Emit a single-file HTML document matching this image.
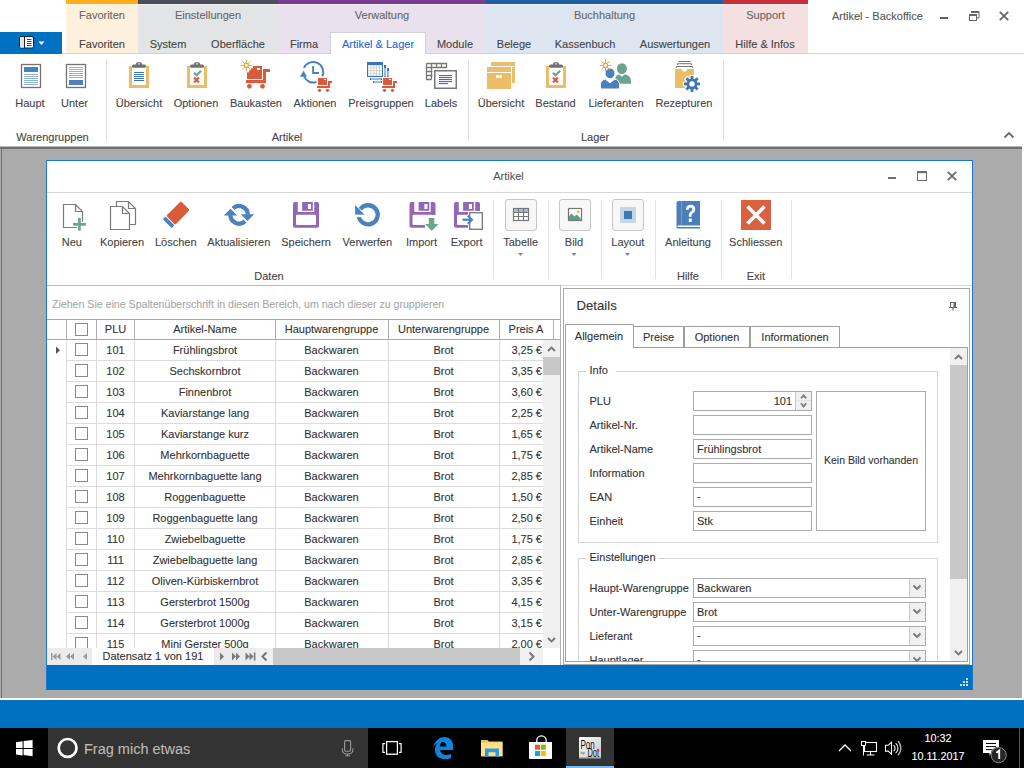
<!DOCTYPE html>
<html><head><meta charset="utf-8">
<style>
*{box-sizing:border-box;margin:0;padding:0}
html,body{width:1024px;height:768px;overflow:hidden;background:#fff}
body{font-family:"Liberation Sans",sans-serif;font-size:11px;color:#444;position:relative}
.a{position:absolute}
svg.a{overflow:visible}
.t{position:absolute;white-space:nowrap;-webkit-text-stroke:0.1px currentColor}
</style></head><body>

<div class="a" style="left:66px;top:0px;width:72px;height:53px;background:#FDF0DC;"></div>
<div class="a" style="left:66px;top:0px;width:72px;height:4px;background:#FFAD1D;"></div>
<div class="a" style="left:66px;top:4px;width:72px;height:1px;background:rgba(255,255,255,0.45);"></div>
<div class="t" style="left:-48.0px;top:8.69px;font-size:11px;line-height:13px;color:#666;width:300px;text-align:center;">Favoriten</div>
<div class="a" style="left:138px;top:0px;width:140px;height:53px;background:#E3E4E6;"></div>
<div class="a" style="left:138px;top:0px;width:140px;height:4px;background:#4B4E57;"></div>
<div class="a" style="left:138px;top:4px;width:140px;height:1px;background:rgba(255,255,255,0.45);"></div>
<div class="t" style="left:58.0px;top:8.69px;font-size:11px;line-height:13px;color:#666;width:300px;text-align:center;">Einstellungen</div>
<div class="a" style="left:278px;top:0px;width:208px;height:53px;background:#E9E1EE;"></div>
<div class="a" style="left:278px;top:0px;width:208px;height:4px;background:#793D8F;"></div>
<div class="a" style="left:278px;top:4px;width:208px;height:1px;background:rgba(255,255,255,0.45);"></div>
<div class="t" style="left:232.0px;top:8.69px;font-size:11px;line-height:13px;color:#666;width:300px;text-align:center;">Verwaltung</div>
<div class="a" style="left:486px;top:0px;width:237px;height:53px;background:#DDE6F0;"></div>
<div class="a" style="left:486px;top:0px;width:237px;height:4px;background:#1F5FA1;"></div>
<div class="a" style="left:486px;top:4px;width:237px;height:1px;background:rgba(255,255,255,0.45);"></div>
<div class="t" style="left:454.5px;top:8.69px;font-size:11px;line-height:13px;color:#666;width:300px;text-align:center;">Buchhaltung</div>
<div class="a" style="left:723px;top:0px;width:85px;height:53px;background:#F4DFE1;"></div>
<div class="a" style="left:723px;top:0px;width:85px;height:4px;background:#C62F39;"></div>
<div class="a" style="left:723px;top:4px;width:85px;height:1px;background:rgba(255,255,255,0.45);"></div>
<div class="t" style="left:615.5px;top:8.69px;font-size:11px;line-height:13px;color:#666;width:300px;text-align:center;">Support</div>
<div class="a" style="left:0px;top:53px;width:1024px;height:1px;background:#D2D2D2;"></div>
<div class="a" style="left:0px;top:32px;width:62px;height:22px;background:#0070C0;"></div>
<svg class="a" style="left:18px;top:35px" width="28" height="15" viewBox="0 0 28 15"><rect x="1.5" y="1.5" width="14" height="11.5" rx="1.5" fill="#fff" stroke="#10243a" stroke-width="1"/>
 <rect x="2" y="2" width="4.5" height="10.5" fill="#e4e4e4"/>
 <line x1="6.5" y1="1.5" x2="6.5" y2="13" stroke="#10243a" stroke-width="1"/>
 <path d="M9 4.5h4.5M9 6.5h4.5M9 8.5h4.5M9 10.5h4.5" stroke="#444" stroke-width="1"/>
 <path d="M20.5 6.5h6l-3 3.5z" fill="#fff"/></svg>
<div class="a" style="left:330px;top:32px;width:96px;height:22px;background:#fff;border:1px solid #D2D2D2;border-bottom:none"></div>
<div class="t" style="left:-48.0px;top:37.69px;font-size:11px;line-height:13px;color:#444;width:300px;text-align:center;">Favoriten</div>
<div class="t" style="left:18.0px;top:37.69px;font-size:11px;line-height:13px;color:#444;width:300px;text-align:center;">System</div>
<div class="t" style="left:88.0px;top:37.69px;font-size:11px;line-height:13px;color:#444;width:300px;text-align:center;">Oberfläche</div>
<div class="t" style="left:154.0px;top:37.69px;font-size:11px;line-height:13px;color:#444;width:300px;text-align:center;">Firma</div>
<div class="t" style="left:228.0px;top:37.69px;font-size:11px;line-height:13px;color:#1B6BCB;width:300px;text-align:center;">Artikel &amp; Lager</div>
<div class="t" style="left:305.0px;top:37.69px;font-size:11px;line-height:13px;color:#444;width:300px;text-align:center;">Module</div>
<div class="t" style="left:364.0px;top:37.69px;font-size:11px;line-height:13px;color:#444;width:300px;text-align:center;">Belege</div>
<div class="t" style="left:435.0px;top:37.69px;font-size:11px;line-height:13px;color:#444;width:300px;text-align:center;">Kassenbuch</div>
<div class="t" style="left:525.0px;top:37.69px;font-size:11px;line-height:13px;color:#444;width:300px;text-align:center;">Auswertungen</div>
<div class="t" style="left:615.0px;top:37.69px;font-size:11px;line-height:13px;color:#444;width:300px;text-align:center;">Hilfe &amp; Infos</div>
<div class="t" style="left:832px;top:9.69px;font-size:11px;line-height:13px;color:#555;">Artikel - Backoffice</div>
<div class="a" style="left:940px;top:17px;width:8px;height:2px;background:#666;"></div>
<svg class="a" style="left:968px;top:10px" width="12" height="12" viewBox="0 0 12 12"><path d="M3.5 1.5h7.5v6.5h-2" fill="none" stroke="#666" stroke-width="1"/><rect x="3" y="1" width="8" height="2" fill="#666"/><rect x="1.5" y="4.5" width="7" height="6" fill="none" stroke="#666" stroke-width="1"/><rect x="1" y="4" width="8" height="2" fill="#666"/></svg>
<svg class="a" style="left:999px;top:11px" width="10" height="10" viewBox="0 0 10 10"><path d="M0.8 0.8l8.4 8.4M9.2 0.8L0.8 9.2" stroke="#666" stroke-width="1.8"/></svg>
<div class="a" style="left:106px;top:60px;width:1px;height:81px;background:#E1E1E1;"></div>
<div class="a" style="left:468px;top:60px;width:1px;height:81px;background:#E1E1E1;"></div>
<div class="a" style="left:723px;top:60px;width:1px;height:81px;background:#E1E1E1;"></div>
<div class="t" style="left:-120.0px;top:96.69px;font-size:11px;line-height:13px;color:#444;width:300px;text-align:center;">Haupt</div>
<div class="t" style="left:-75.5px;top:96.69px;font-size:11px;line-height:13px;color:#444;width:300px;text-align:center;">Unter</div>
<div class="t" style="left:-11.0px;top:96.69px;font-size:11px;line-height:13px;color:#444;width:300px;text-align:center;">Übersicht</div>
<div class="t" style="left:46.0px;top:96.69px;font-size:11px;line-height:13px;color:#444;width:300px;text-align:center;">Optionen</div>
<div class="t" style="left:106.0px;top:96.69px;font-size:11px;line-height:13px;color:#444;width:300px;text-align:center;">Baukasten</div>
<div class="t" style="left:165.0px;top:96.69px;font-size:11px;line-height:13px;color:#444;width:300px;text-align:center;">Aktionen</div>
<div class="t" style="left:231.0px;top:96.69px;font-size:11px;line-height:13px;color:#444;width:300px;text-align:center;">Preisgruppen</div>
<div class="t" style="left:291.0px;top:96.69px;font-size:11px;line-height:13px;color:#444;width:300px;text-align:center;">Labels</div>
<div class="t" style="left:351.0px;top:96.69px;font-size:11px;line-height:13px;color:#444;width:300px;text-align:center;">Übersicht</div>
<div class="t" style="left:405.5px;top:96.69px;font-size:11px;line-height:13px;color:#444;width:300px;text-align:center;">Bestand</div>
<div class="t" style="left:466.0px;top:96.69px;font-size:11px;line-height:13px;color:#444;width:300px;text-align:center;">Lieferanten</div>
<div class="t" style="left:534.0px;top:96.69px;font-size:11px;line-height:13px;color:#444;width:300px;text-align:center;">Rezepturen</div>
<div class="t" style="left:-97.5px;top:130.69px;font-size:11px;line-height:13px;color:#444;width:300px;text-align:center;">Warengruppen</div>
<div class="t" style="left:137.0px;top:130.69px;font-size:11px;line-height:13px;color:#444;width:300px;text-align:center;">Artikel</div>
<div class="t" style="left:445.0px;top:130.69px;font-size:11px;line-height:13px;color:#444;width:300px;text-align:center;">Lager</div>
<svg class="a" style="left:0px;top:0px" width="1024" height="768" viewBox="0 0 1024 768"><path d="M1004.5 137.5l4.5-4.5 4.5 4.5" fill="none" stroke="#6a6a6a" stroke-width="1.8"/><rect x="21.5" y="64.5" width="19" height="23" fill="#fff" stroke="#727272" stroke-width="1.3"/><rect x="24" y="67" width="14" height="5" fill="#4A80BB"/><rect x="24" y="74" width="14" height="1" fill="#8FAED4"/><rect x="24" y="76" width="14" height="1" fill="#8FAED4"/><rect x="24" y="78" width="14" height="1" fill="#8FAED4"/><rect x="24" y="80" width="14" height="1" fill="#8FAED4"/><rect x="24" y="82" width="14" height="1" fill="#8FAED4"/><rect x="24" y="84" width="14" height="1" fill="#8FAED4"/><rect x="66.5" y="64.5" width="19" height="23" fill="#fff" stroke="#727272" stroke-width="1.3"/><rect x="69" y="80" width="14" height="5" fill="#4A80BB"/><rect x="69" y="67" width="14" height="1" fill="#8FAED4"/><rect x="69" y="69" width="14" height="1" fill="#8FAED4"/><rect x="69" y="71" width="14" height="1" fill="#8FAED4"/><rect x="69" y="73" width="14" height="1" fill="#8FAED4"/><rect x="69" y="75" width="14" height="1" fill="#8FAED4"/><rect x="69" y="77" width="14" height="1" fill="#8FAED4"/><path d="M129 66h3v19h14v-19h3v22h-20z" fill="#EBBD68"/><rect x="132" y="64.5" width="14" height="3.2" rx="1.5" fill="#707070"/><rect x="136.6" y="62.8" width="4.8" height="2.6" rx="1.3" fill="#707070" stroke="#707070" stroke-width="1.2"/><rect x="138.2" y="63.3" width="1.6" height="1.2" fill="#fff"/><rect x="134" y="72" width="10" height="1" fill="#3B74B4"/><rect x="134" y="74" width="10" height="1" fill="#3B74B4"/><rect x="134" y="76" width="10" height="1" fill="#3B74B4"/><rect x="134" y="78" width="10" height="1" fill="#3B74B4"/><rect x="134" y="80" width="10" height="1" fill="#3B74B4"/><path d="M187 66h3v19h14v-19h3v22h-20z" fill="#EBBD68"/><rect x="190" y="64.5" width="14" height="3.2" rx="1.5" fill="#707070"/><rect x="194.6" y="62.8" width="4.8" height="2.6" rx="1.3" fill="#707070" stroke="#707070" stroke-width="1.2"/><rect x="196.2" y="63.3" width="1.6" height="1.2" fill="#fff"/><path d="M194 72.8l2.6 2.5 4.5-4.6" fill="none" stroke="#6BA38F" stroke-width="2.2"/><path d="M194 77.5l5 5M199 77.5l-5 5" stroke="#D95B3B" stroke-width="2.2"/><path d="M546 66h3v19h14v-19h3v22h-20z" fill="#EBBD68"/><rect x="549" y="64.5" width="14" height="3.2" rx="1.5" fill="#707070"/><rect x="553.6" y="62.8" width="4.8" height="2.6" rx="1.3" fill="#707070" stroke="#707070" stroke-width="1.2"/><rect x="555.2" y="63.3" width="1.6" height="1.2" fill="#fff"/><path d="M553 72.8l2.6 2.5 4.5-4.6" fill="none" stroke="#6BA38F" stroke-width="2.2"/><path d="M553 77.5l5 5M558 77.5l-5 5" stroke="#D95B3B" stroke-width="2.2"/><path d="M253 66h9v13h-15v-6.8h2v-2h2v-2h2z" fill="#D95B3B"/><rect x="257" y="68" width="3" height="2" fill="#fff"/><rect x="263" y="69" width="7" height="3" fill="#D95B3B"/><rect x="263" y="69" width="3" height="14" fill="#D95B3B"/><rect x="246" y="80" width="20" height="3" fill="#D95B3B"/><circle cx="249.4" cy="86.3" r="2.4" fill="#D95B3B"/><circle cx="262.5" cy="86.3" r="2.4" fill="#D95B3B"/><g stroke="#E8A93A" stroke-width="1.0" stroke-linecap="round"><line x1="248.60" y1="65.40" x2="251.90" y2="65.40"/><line x1="247.96" y1="66.96" x2="250.29" y2="69.29"/><line x1="246.40" y1="67.60" x2="246.40" y2="70.90"/><line x1="244.84" y1="66.96" x2="242.51" y2="69.29"/><line x1="244.20" y1="65.40" x2="240.90" y2="65.40"/><line x1="244.84" y1="63.84" x2="242.51" y2="61.51"/><line x1="246.40" y1="63.20" x2="246.40" y2="59.90"/><line x1="247.96" y1="63.84" x2="250.29" y2="61.51"/></g><circle cx="246.4" cy="65.4" r="2" fill="#fff" stroke="#E8A93A" stroke-width="1.1"/><path d="M303.9 67.9 A9.6 9.6 0 0 1 322.3 76.3" fill="none" stroke="#4A82C0" stroke-width="2"/><path d="M316.4 82 A9.6 9.6 0 0 1 304.2 76.5" fill="none" stroke="#4A82C0" stroke-width="2"/><path d="M300 76.8l3.5-6 3.5 6z" fill="#4A82C0"/><path d="M313.1 66v7h5.9" fill="none" stroke="#4A82C0" stroke-width="1.9"/><rect x="318" y="78" width="9" height="7" fill="#D95B3B"/><rect x="324" y="79" width="2" height="1" fill="#fff"/><rect x="328" y="81" width="4" height="2" fill="#D95B3B"/><rect x="328" y="81" width="2" height="7" fill="#D95B3B"/><rect x="317" y="86" width="13" height="2" fill="#D95B3B"/><circle cx="319.5" cy="90.3" r="1.6" fill="#D95B3B"/><circle cx="327.5" cy="90.3" r="1.6" fill="#D95B3B"/><rect x="367" y="62" width="16" height="15" fill="#C8C8C8"/><rect x="367" y="62" width="16" height="3" fill="#3B74B4"/><rect x="367" y="62" width="1" height="15" fill="#3B74B4"/><rect x="382" y="62" width="1" height="15" fill="#3B74B4"/><rect x="367" y="76" width="16" height="1" fill="#3B74B4"/><rect x="368.40" y="65.50" width="2.1" height="2" fill="#fff"/><rect x="368.40" y="68.20" width="2.1" height="2" fill="#fff"/><rect x="368.40" y="70.90" width="2.1" height="2" fill="#fff"/><rect x="368.40" y="73.60" width="2.1" height="2" fill="#fff"/><rect x="371.25" y="65.50" width="2.1" height="2" fill="#fff"/><rect x="371.25" y="68.20" width="2.1" height="2" fill="#fff"/><rect x="371.25" y="70.90" width="2.1" height="2" fill="#fff"/><rect x="371.25" y="73.60" width="2.1" height="2" fill="#fff"/><rect x="374.10" y="65.50" width="2.1" height="2" fill="#fff"/><rect x="374.10" y="68.20" width="2.1" height="2" fill="#fff"/><rect x="374.10" y="70.90" width="2.1" height="2" fill="#fff"/><rect x="374.10" y="73.60" width="2.1" height="2" fill="#fff"/><rect x="376.95" y="65.50" width="2.1" height="2" fill="#fff"/><rect x="376.95" y="68.20" width="2.1" height="2" fill="#fff"/><rect x="376.95" y="70.90" width="2.1" height="2" fill="#fff"/><rect x="376.95" y="73.60" width="2.1" height="2" fill="#fff"/><rect x="379.80" y="65.50" width="2.1" height="2" fill="#fff"/><rect x="379.80" y="68.20" width="2.1" height="2" fill="#fff"/><rect x="379.80" y="70.90" width="2.1" height="2" fill="#fff"/><rect x="379.80" y="73.60" width="2.1" height="2" fill="#fff"/><rect x="384" y="65" width="2" height="12" fill="#3B74B4"/><rect x="384.5" y="68" width="1" height="8.5" fill="#fff"/><rect x="387" y="68" width="2" height="9" fill="#3B74B4"/><rect x="387.5" y="71" width="1" height="5.5" fill="#fff"/><rect x="370" y="78" width="12" height="2" fill="#3B74B4"/><rect x="371" y="78.5" width="10" height="1" fill="#fff"/><rect x="373" y="81" width="9" height="2" fill="#3B74B4"/><rect x="374" y="81.5" width="7" height="1" fill="#fff"/><rect x="383" y="78" width="9" height="7" fill="#D95B3B"/><rect x="389" y="79" width="2" height="1" fill="#fff"/><rect x="393" y="81" width="4" height="2" fill="#D95B3B"/><rect x="393" y="81" width="2" height="7" fill="#D95B3B"/><rect x="382" y="86" width="13" height="2" fill="#D95B3B"/><circle cx="384.5" cy="90.3" r="1.6" fill="#D95B3B"/><circle cx="392.5" cy="90.3" r="1.6" fill="#D95B3B"/><path d="M426.5 63.5h20v4M426.5 63.5v16h5M426.5 67.5h20M426.5 71.5h6M426.5 75.5h6M431.5 63.5v16M436.5 63.5v4.5M441.5 63.5v4.5M446.5 63.5v4.5" fill="none" stroke="#777" stroke-width="1.3"/><rect x="434.75" y="70.75" width="21.5" height="17.5" fill="#fff" stroke="#777" stroke-width="1.5"/><rect x="439" y="75" width="13" height="1.1" fill="#3B74B4"/><rect x="439" y="77" width="13" height="1.1" fill="#3B74B4"/><rect x="439" y="79" width="13" height="1.1" fill="#3B74B4"/><rect x="439" y="81" width="13" height="1.1" fill="#3B74B4"/><rect x="439" y="83" width="9" height="1.1" fill="#3B74B4"/><rect x="491" y="62" width="24" height="4" fill="#EBBD68"/><rect x="512" y="67" width="3" height="16" fill="#EBBD68"/><rect x="487" y="67" width="24" height="5" fill="#EBBD68"/><rect x="487" y="73" width="24" height="16" fill="#EBBD68"/><rect x="496" y="75" width="6" height="3" fill="#fff"/><ellipse cx="621.9" cy="68.6" rx="5" ry="5.4" fill="#6BA38F"/><path d="M615.3 83.7v-4.5c0-3 2-4.8 4-4.8l2.6 2.3 2.6-2.3c3.5 0 6.5 2.5 6.5 6.5v2.8z" fill="#6BA38F"/><path d="M600.5 89v-4.5c0-3.5 2.5-5.2 5-5.2l4.5 3.5 4.5-3.5c3 0 5 2 5 5.2v4.5z" fill="#4A80BB" stroke="#fff" stroke-width="1"/><ellipse cx="610" cy="73.3" rx="5" ry="5.4" fill="#4A80BB" stroke="#fff" stroke-width="1"/><circle cx="605.5" cy="65.4" r="4.5" fill="#fff"/><g stroke="#E8A93A" stroke-width="1.0" stroke-linecap="round"><line x1="607.70" y1="65.40" x2="611.00" y2="65.40"/><line x1="607.06" y1="66.96" x2="609.39" y2="69.29"/><line x1="605.50" y1="67.60" x2="605.50" y2="70.90"/><line x1="603.94" y1="66.96" x2="601.61" y2="69.29"/><line x1="603.30" y1="65.40" x2="600.00" y2="65.40"/><line x1="603.94" y1="63.84" x2="601.61" y2="61.51"/><line x1="605.50" y1="63.20" x2="605.50" y2="59.90"/><line x1="607.06" y1="63.84" x2="609.39" y2="61.51"/></g><circle cx="605.5" cy="65.4" r="2" fill="#fff" stroke="#E8A93A" stroke-width="1.1"/><path d="M678.2 61.5h12.6M677.5 65v-1.3h14v1.3M676.5 67.8v-1.3h16v1.3" fill="none" stroke="#777" stroke-width="1"/><path d="M675 69h7a2.5 2.6 0 0 0 5 0h7v19h-19z" fill="#EBBD68"/><g transform="translate(692,83.9)"><rect x="-2.4" y="-9" width="4.8" height="5.5" fill="#fff" transform="rotate(0)"/><rect x="-2.4" y="-9" width="4.8" height="5.5" fill="#fff" transform="rotate(45)"/><rect x="-2.4" y="-9" width="4.8" height="5.5" fill="#fff" transform="rotate(90)"/><rect x="-2.4" y="-9" width="4.8" height="5.5" fill="#fff" transform="rotate(135)"/><rect x="-2.4" y="-9" width="4.8" height="5.5" fill="#fff" transform="rotate(180)"/><rect x="-2.4" y="-9" width="4.8" height="5.5" fill="#fff" transform="rotate(225)"/><rect x="-2.4" y="-9" width="4.8" height="5.5" fill="#fff" transform="rotate(270)"/><rect x="-2.4" y="-9" width="4.8" height="5.5" fill="#fff" transform="rotate(315)"/><circle r="6.5" fill="#fff"/><rect x="-1.4" y="-8" width="2.8" height="4" fill="#3F76B8" transform="rotate(0)"/><rect x="-1.4" y="-8" width="2.8" height="4" fill="#3F76B8" transform="rotate(45)"/><rect x="-1.4" y="-8" width="2.8" height="4" fill="#3F76B8" transform="rotate(90)"/><rect x="-1.4" y="-8" width="2.8" height="4" fill="#3F76B8" transform="rotate(135)"/><rect x="-1.4" y="-8" width="2.8" height="4" fill="#3F76B8" transform="rotate(180)"/><rect x="-1.4" y="-8" width="2.8" height="4" fill="#3F76B8" transform="rotate(225)"/><rect x="-1.4" y="-8" width="2.8" height="4" fill="#3F76B8" transform="rotate(270)"/><rect x="-1.4" y="-8" width="2.8" height="4" fill="#3F76B8" transform="rotate(315)"/><circle r="5.5" fill="#3F76B8"/><circle r="2.7" fill="#fff"/></g></svg>
<div class="a" style="left:0px;top:146px;width:1024px;height:1px;background:#B8B8B8;"></div>
<div class="a" style="left:0px;top:147px;width:1022px;height:551px;background:#ABABAB;"></div>
<div class="a" style="left:0px;top:147px;width:1022px;height:2px;background:#707070;"></div>
<div class="a" style="left:1px;top:147px;width:1px;height:551px;background:#707070;"></div>
<div class="a" style="left:1022px;top:146px;width:2px;height:552px;background:#fff;"></div>
<div class="a" style="left:0px;top:698px;width:1024px;height:2px;background:#fff;"></div>
<div class="a" style="left:0px;top:700px;width:1024px;height:28px;background:#0070C0;"></div>
<div class="a" style="left:46px;top:160px;width:927px;height:530px;background:#fff;border:1px solid #1B78D0"></div>
<div class="t" style="left:358.5px;top:169.69px;font-size:11px;line-height:13px;color:#555;width:300px;text-align:center;">Artikel</div>
<div class="a" style="left:888px;top:177px;width:8px;height:2px;background:#6E6E6E;"></div>
<div class="a" style="left:47px;top:192px;width:925px;height:1px;background:#D8D8D8;"></div>
<div class="t" style="left:-78.2px;top:235.69px;font-size:11px;line-height:13px;color:#444;width:300px;text-align:center;">Neu</div>
<div class="t" style="left:-28.0px;top:235.69px;font-size:11px;line-height:13px;color:#444;width:300px;text-align:center;">Kopieren</div>
<div class="t" style="left:25.80000000000001px;top:235.69px;font-size:11px;line-height:13px;color:#444;width:300px;text-align:center;">Löschen</div>
<div class="t" style="left:88.80000000000001px;top:235.69px;font-size:11px;line-height:13px;color:#444;width:300px;text-align:center;">Aktualisieren</div>
<div class="t" style="left:156.0px;top:235.69px;font-size:11px;line-height:13px;color:#444;width:300px;text-align:center;">Speichern</div>
<div class="t" style="left:217.3px;top:235.69px;font-size:11px;line-height:13px;color:#444;width:300px;text-align:center;">Verwerfen</div>
<div class="t" style="left:271.5px;top:235.69px;font-size:11px;line-height:13px;color:#444;width:300px;text-align:center;">Import</div>
<div class="t" style="left:316.6px;top:235.69px;font-size:11px;line-height:13px;color:#444;width:300px;text-align:center;">Export</div>
<div class="t" style="left:370.70000000000005px;top:235.69px;font-size:11px;line-height:13px;color:#444;width:300px;text-align:center;">Tabelle</div>
<div class="t" style="left:424.0px;top:235.69px;font-size:11px;line-height:13px;color:#444;width:300px;text-align:center;">Bild</div>
<div class="t" style="left:477.79999999999995px;top:235.69px;font-size:11px;line-height:13px;color:#444;width:300px;text-align:center;">Layout</div>
<div class="t" style="left:538.0px;top:235.69px;font-size:11px;line-height:13px;color:#444;width:300px;text-align:center;">Anleitung</div>
<div class="t" style="left:605.7px;top:235.69px;font-size:11px;line-height:13px;color:#444;width:300px;text-align:center;">Schliessen</div>
<div class="t" style="left:119.0px;top:269.69px;font-size:11px;line-height:13px;color:#444;width:300px;text-align:center;">Daten</div>
<div class="t" style="left:538.0px;top:269.69px;font-size:11px;line-height:13px;color:#444;width:300px;text-align:center;">Hilfe</div>
<div class="t" style="left:605.8px;top:269.69px;font-size:11px;line-height:13px;color:#444;width:300px;text-align:center;">Exit</div>
<div class="a" style="left:493px;top:200px;width:1px;height:79px;background:#E3E3E3;"></div>
<div class="a" style="left:548px;top:200px;width:1px;height:79px;background:#E3E3E3;"></div>
<div class="a" style="left:601px;top:200px;width:1px;height:79px;background:#E3E3E3;"></div>
<div class="a" style="left:655px;top:200px;width:1px;height:79px;background:#E3E3E3;"></div>
<div class="a" style="left:721px;top:200px;width:1px;height:79px;background:#E3E3E3;"></div>
<div class="a" style="left:791px;top:200px;width:1px;height:79px;background:#E3E3E3;"></div>
<div class="a" style="left:47px;top:285px;width:514px;height:1px;background:#B8B8B8;"></div>
<div class="a" style="left:561px;top:285px;width:411px;height:1px;background:#D8D8D8;"></div>
<div class="a" style="left:47px;top:286px;width:513px;height:33px;background:#fff;"></div>
<div class="a" style="left:560px;top:286px;width:1px;height:379px;background:#B4B4B4;"></div>
<div class="t" style="left:52px;top:298.33px;font-size:10.6px;line-height:13px;color:#A8A8A8;">Ziehen Sie eine Spaltenüberschrift in diesen Bereich, um nach dieser zu gruppieren</div>
<div class="a" style="left:47px;top:319px;width:513px;height:1px;background:#A8A8A8;"></div>
<div class="a" style="left:47px;top:339px;width:513px;height:1px;background:#A8A8A8;"></div>
<div class="a" style="left:66px;top:320px;width:1px;height:19px;background:#B0B0B0;"></div>
<div class="a" style="left:96px;top:320px;width:1px;height:19px;background:#B0B0B0;"></div>
<div class="a" style="left:134px;top:320px;width:1px;height:19px;background:#B0B0B0;"></div>
<div class="a" style="left:275px;top:320px;width:1px;height:19px;background:#B0B0B0;"></div>
<div class="a" style="left:388px;top:320px;width:1px;height:19px;background:#B0B0B0;"></div>
<div class="a" style="left:499px;top:320px;width:1px;height:19px;background:#B0B0B0;"></div>
<div class="a" style="left:553px;top:320px;width:1px;height:19px;background:#B0B0B0;"></div>
<div class="t" style="left:-34.5px;top:322.69px;font-size:11px;line-height:13px;color:#333;width:300px;text-align:center;">PLU</div>
<div class="t" style="left:55.0px;top:322.69px;font-size:11px;line-height:13px;color:#333;width:300px;text-align:center;">Artikel-Name</div>
<div class="t" style="left:181.5px;top:322.69px;font-size:11px;line-height:13px;color:#333;width:300px;text-align:center;">Hauptwarengruppe</div>
<div class="t" style="left:293.5px;top:322.69px;font-size:11px;line-height:13px;color:#333;width:300px;text-align:center;">Unterwarengruppe</div>
<div class="t" style="left:376.0px;top:322.69px;font-size:11px;line-height:13px;color:#333;width:300px;text-align:center;">Preis A</div>
<div class="a" style="left:47px;top:340px;width:496px;height:308px;overflow:hidden">
<div class="a" style="left:19px;top:20px;width:477px;height:1px;background:#DCDCDC"></div>
<div class="a" style="left:19px;top:0px;width:1px;height:21px;background:#DCDCDC"></div>
<div class="a" style="left:49px;top:0px;width:1px;height:21px;background:#DCDCDC"></div>
<div class="a" style="left:87px;top:0px;width:1px;height:21px;background:#DCDCDC"></div>
<div class="a" style="left:228px;top:0px;width:1px;height:21px;background:#DCDCDC"></div>
<div class="a" style="left:341px;top:0px;width:1px;height:21px;background:#DCDCDC"></div>
<div class="a" style="left:452px;top:0px;width:1px;height:21px;background:#DCDCDC"></div>
<div class="a" style="left:28px;top:3px;width:13px;height:13px;border:1px solid #8a8a8a"></div>
<div class="t" style="left:-81.5px;top:3.69px;width:300px;text-align:center;font-size:11px;line-height:13px;color:#333">101</div>
<div class="t" style="left:8px;top:3.69px;width:300px;text-align:center;font-size:11px;line-height:13px;color:#333">Frühlingsbrot</div>
<div class="t" style="left:134.5px;top:3.69px;width:300px;text-align:center;font-size:11px;line-height:13px;color:#333">Backwaren</div>
<div class="t" style="left:246.5px;top:3.69px;width:300px;text-align:center;font-size:11px;line-height:13px;color:#333">Brot</div>
<div class="t" style="left:452px;top:3.69px;width:44px;text-align:right;font-size:11px;line-height:13px;color:#333;padding-right:1px">3,25 €</div>
<div class="a" style="left:19px;top:41px;width:477px;height:1px;background:#DCDCDC"></div>
<div class="a" style="left:19px;top:21px;width:1px;height:21px;background:#DCDCDC"></div>
<div class="a" style="left:49px;top:21px;width:1px;height:21px;background:#DCDCDC"></div>
<div class="a" style="left:87px;top:21px;width:1px;height:21px;background:#DCDCDC"></div>
<div class="a" style="left:228px;top:21px;width:1px;height:21px;background:#DCDCDC"></div>
<div class="a" style="left:341px;top:21px;width:1px;height:21px;background:#DCDCDC"></div>
<div class="a" style="left:452px;top:21px;width:1px;height:21px;background:#DCDCDC"></div>
<div class="a" style="left:28px;top:24px;width:13px;height:13px;border:1px solid #8a8a8a"></div>
<div class="t" style="left:-81.5px;top:24.69px;width:300px;text-align:center;font-size:11px;line-height:13px;color:#333">102</div>
<div class="t" style="left:8px;top:24.69px;width:300px;text-align:center;font-size:11px;line-height:13px;color:#333">Sechskornbrot</div>
<div class="t" style="left:134.5px;top:24.69px;width:300px;text-align:center;font-size:11px;line-height:13px;color:#333">Backwaren</div>
<div class="t" style="left:246.5px;top:24.69px;width:300px;text-align:center;font-size:11px;line-height:13px;color:#333">Brot</div>
<div class="t" style="left:452px;top:24.69px;width:44px;text-align:right;font-size:11px;line-height:13px;color:#333;padding-right:1px">3,35 €</div>
<div class="a" style="left:19px;top:62px;width:477px;height:1px;background:#DCDCDC"></div>
<div class="a" style="left:19px;top:42px;width:1px;height:21px;background:#DCDCDC"></div>
<div class="a" style="left:49px;top:42px;width:1px;height:21px;background:#DCDCDC"></div>
<div class="a" style="left:87px;top:42px;width:1px;height:21px;background:#DCDCDC"></div>
<div class="a" style="left:228px;top:42px;width:1px;height:21px;background:#DCDCDC"></div>
<div class="a" style="left:341px;top:42px;width:1px;height:21px;background:#DCDCDC"></div>
<div class="a" style="left:452px;top:42px;width:1px;height:21px;background:#DCDCDC"></div>
<div class="a" style="left:28px;top:45px;width:13px;height:13px;border:1px solid #8a8a8a"></div>
<div class="t" style="left:-81.5px;top:45.69px;width:300px;text-align:center;font-size:11px;line-height:13px;color:#333">103</div>
<div class="t" style="left:8px;top:45.69px;width:300px;text-align:center;font-size:11px;line-height:13px;color:#333">Finnenbrot</div>
<div class="t" style="left:134.5px;top:45.69px;width:300px;text-align:center;font-size:11px;line-height:13px;color:#333">Backwaren</div>
<div class="t" style="left:246.5px;top:45.69px;width:300px;text-align:center;font-size:11px;line-height:13px;color:#333">Brot</div>
<div class="t" style="left:452px;top:45.69px;width:44px;text-align:right;font-size:11px;line-height:13px;color:#333;padding-right:1px">3,60 €</div>
<div class="a" style="left:19px;top:83px;width:477px;height:1px;background:#DCDCDC"></div>
<div class="a" style="left:19px;top:63px;width:1px;height:21px;background:#DCDCDC"></div>
<div class="a" style="left:49px;top:63px;width:1px;height:21px;background:#DCDCDC"></div>
<div class="a" style="left:87px;top:63px;width:1px;height:21px;background:#DCDCDC"></div>
<div class="a" style="left:228px;top:63px;width:1px;height:21px;background:#DCDCDC"></div>
<div class="a" style="left:341px;top:63px;width:1px;height:21px;background:#DCDCDC"></div>
<div class="a" style="left:452px;top:63px;width:1px;height:21px;background:#DCDCDC"></div>
<div class="a" style="left:28px;top:66px;width:13px;height:13px;border:1px solid #8a8a8a"></div>
<div class="t" style="left:-81.5px;top:66.69px;width:300px;text-align:center;font-size:11px;line-height:13px;color:#333">104</div>
<div class="t" style="left:8px;top:66.69px;width:300px;text-align:center;font-size:11px;line-height:13px;color:#333">Kaviarstange lang</div>
<div class="t" style="left:134.5px;top:66.69px;width:300px;text-align:center;font-size:11px;line-height:13px;color:#333">Backwaren</div>
<div class="t" style="left:246.5px;top:66.69px;width:300px;text-align:center;font-size:11px;line-height:13px;color:#333">Brot</div>
<div class="t" style="left:452px;top:66.69px;width:44px;text-align:right;font-size:11px;line-height:13px;color:#333;padding-right:1px">2,25 €</div>
<div class="a" style="left:19px;top:104px;width:477px;height:1px;background:#DCDCDC"></div>
<div class="a" style="left:19px;top:84px;width:1px;height:21px;background:#DCDCDC"></div>
<div class="a" style="left:49px;top:84px;width:1px;height:21px;background:#DCDCDC"></div>
<div class="a" style="left:87px;top:84px;width:1px;height:21px;background:#DCDCDC"></div>
<div class="a" style="left:228px;top:84px;width:1px;height:21px;background:#DCDCDC"></div>
<div class="a" style="left:341px;top:84px;width:1px;height:21px;background:#DCDCDC"></div>
<div class="a" style="left:452px;top:84px;width:1px;height:21px;background:#DCDCDC"></div>
<div class="a" style="left:28px;top:87px;width:13px;height:13px;border:1px solid #8a8a8a"></div>
<div class="t" style="left:-81.5px;top:87.69px;width:300px;text-align:center;font-size:11px;line-height:13px;color:#333">105</div>
<div class="t" style="left:8px;top:87.69px;width:300px;text-align:center;font-size:11px;line-height:13px;color:#333">Kaviarstange kurz</div>
<div class="t" style="left:134.5px;top:87.69px;width:300px;text-align:center;font-size:11px;line-height:13px;color:#333">Backwaren</div>
<div class="t" style="left:246.5px;top:87.69px;width:300px;text-align:center;font-size:11px;line-height:13px;color:#333">Brot</div>
<div class="t" style="left:452px;top:87.69px;width:44px;text-align:right;font-size:11px;line-height:13px;color:#333;padding-right:1px">1,65 €</div>
<div class="a" style="left:19px;top:125px;width:477px;height:1px;background:#DCDCDC"></div>
<div class="a" style="left:19px;top:105px;width:1px;height:21px;background:#DCDCDC"></div>
<div class="a" style="left:49px;top:105px;width:1px;height:21px;background:#DCDCDC"></div>
<div class="a" style="left:87px;top:105px;width:1px;height:21px;background:#DCDCDC"></div>
<div class="a" style="left:228px;top:105px;width:1px;height:21px;background:#DCDCDC"></div>
<div class="a" style="left:341px;top:105px;width:1px;height:21px;background:#DCDCDC"></div>
<div class="a" style="left:452px;top:105px;width:1px;height:21px;background:#DCDCDC"></div>
<div class="a" style="left:28px;top:108px;width:13px;height:13px;border:1px solid #8a8a8a"></div>
<div class="t" style="left:-81.5px;top:108.69px;width:300px;text-align:center;font-size:11px;line-height:13px;color:#333">106</div>
<div class="t" style="left:8px;top:108.69px;width:300px;text-align:center;font-size:11px;line-height:13px;color:#333">Mehrkornbaguette</div>
<div class="t" style="left:134.5px;top:108.69px;width:300px;text-align:center;font-size:11px;line-height:13px;color:#333">Backwaren</div>
<div class="t" style="left:246.5px;top:108.69px;width:300px;text-align:center;font-size:11px;line-height:13px;color:#333">Brot</div>
<div class="t" style="left:452px;top:108.69px;width:44px;text-align:right;font-size:11px;line-height:13px;color:#333;padding-right:1px">1,75 €</div>
<div class="a" style="left:19px;top:146px;width:477px;height:1px;background:#DCDCDC"></div>
<div class="a" style="left:19px;top:126px;width:1px;height:21px;background:#DCDCDC"></div>
<div class="a" style="left:49px;top:126px;width:1px;height:21px;background:#DCDCDC"></div>
<div class="a" style="left:87px;top:126px;width:1px;height:21px;background:#DCDCDC"></div>
<div class="a" style="left:228px;top:126px;width:1px;height:21px;background:#DCDCDC"></div>
<div class="a" style="left:341px;top:126px;width:1px;height:21px;background:#DCDCDC"></div>
<div class="a" style="left:452px;top:126px;width:1px;height:21px;background:#DCDCDC"></div>
<div class="a" style="left:28px;top:129px;width:13px;height:13px;border:1px solid #8a8a8a"></div>
<div class="t" style="left:-81.5px;top:129.69px;width:300px;text-align:center;font-size:11px;line-height:13px;color:#333">107</div>
<div class="t" style="left:8px;top:129.69px;width:300px;text-align:center;font-size:11px;line-height:13px;color:#333">Mehrkornbaguette lang</div>
<div class="t" style="left:134.5px;top:129.69px;width:300px;text-align:center;font-size:11px;line-height:13px;color:#333">Backwaren</div>
<div class="t" style="left:246.5px;top:129.69px;width:300px;text-align:center;font-size:11px;line-height:13px;color:#333">Brot</div>
<div class="t" style="left:452px;top:129.69px;width:44px;text-align:right;font-size:11px;line-height:13px;color:#333;padding-right:1px">2,85 €</div>
<div class="a" style="left:19px;top:167px;width:477px;height:1px;background:#DCDCDC"></div>
<div class="a" style="left:19px;top:147px;width:1px;height:21px;background:#DCDCDC"></div>
<div class="a" style="left:49px;top:147px;width:1px;height:21px;background:#DCDCDC"></div>
<div class="a" style="left:87px;top:147px;width:1px;height:21px;background:#DCDCDC"></div>
<div class="a" style="left:228px;top:147px;width:1px;height:21px;background:#DCDCDC"></div>
<div class="a" style="left:341px;top:147px;width:1px;height:21px;background:#DCDCDC"></div>
<div class="a" style="left:452px;top:147px;width:1px;height:21px;background:#DCDCDC"></div>
<div class="a" style="left:28px;top:150px;width:13px;height:13px;border:1px solid #8a8a8a"></div>
<div class="t" style="left:-81.5px;top:150.69px;width:300px;text-align:center;font-size:11px;line-height:13px;color:#333">108</div>
<div class="t" style="left:8px;top:150.69px;width:300px;text-align:center;font-size:11px;line-height:13px;color:#333">Roggenbaguette</div>
<div class="t" style="left:134.5px;top:150.69px;width:300px;text-align:center;font-size:11px;line-height:13px;color:#333">Backwaren</div>
<div class="t" style="left:246.5px;top:150.69px;width:300px;text-align:center;font-size:11px;line-height:13px;color:#333">Brot</div>
<div class="t" style="left:452px;top:150.69px;width:44px;text-align:right;font-size:11px;line-height:13px;color:#333;padding-right:1px">1,50 €</div>
<div class="a" style="left:19px;top:188px;width:477px;height:1px;background:#DCDCDC"></div>
<div class="a" style="left:19px;top:168px;width:1px;height:21px;background:#DCDCDC"></div>
<div class="a" style="left:49px;top:168px;width:1px;height:21px;background:#DCDCDC"></div>
<div class="a" style="left:87px;top:168px;width:1px;height:21px;background:#DCDCDC"></div>
<div class="a" style="left:228px;top:168px;width:1px;height:21px;background:#DCDCDC"></div>
<div class="a" style="left:341px;top:168px;width:1px;height:21px;background:#DCDCDC"></div>
<div class="a" style="left:452px;top:168px;width:1px;height:21px;background:#DCDCDC"></div>
<div class="a" style="left:28px;top:171px;width:13px;height:13px;border:1px solid #8a8a8a"></div>
<div class="t" style="left:-81.5px;top:171.69px;width:300px;text-align:center;font-size:11px;line-height:13px;color:#333">109</div>
<div class="t" style="left:8px;top:171.69px;width:300px;text-align:center;font-size:11px;line-height:13px;color:#333">Roggenbaguette lang</div>
<div class="t" style="left:134.5px;top:171.69px;width:300px;text-align:center;font-size:11px;line-height:13px;color:#333">Backwaren</div>
<div class="t" style="left:246.5px;top:171.69px;width:300px;text-align:center;font-size:11px;line-height:13px;color:#333">Brot</div>
<div class="t" style="left:452px;top:171.69px;width:44px;text-align:right;font-size:11px;line-height:13px;color:#333;padding-right:1px">2,50 €</div>
<div class="a" style="left:19px;top:209px;width:477px;height:1px;background:#DCDCDC"></div>
<div class="a" style="left:19px;top:189px;width:1px;height:21px;background:#DCDCDC"></div>
<div class="a" style="left:49px;top:189px;width:1px;height:21px;background:#DCDCDC"></div>
<div class="a" style="left:87px;top:189px;width:1px;height:21px;background:#DCDCDC"></div>
<div class="a" style="left:228px;top:189px;width:1px;height:21px;background:#DCDCDC"></div>
<div class="a" style="left:341px;top:189px;width:1px;height:21px;background:#DCDCDC"></div>
<div class="a" style="left:452px;top:189px;width:1px;height:21px;background:#DCDCDC"></div>
<div class="a" style="left:28px;top:192px;width:13px;height:13px;border:1px solid #8a8a8a"></div>
<div class="t" style="left:-81.5px;top:192.69px;width:300px;text-align:center;font-size:11px;line-height:13px;color:#333">110</div>
<div class="t" style="left:8px;top:192.69px;width:300px;text-align:center;font-size:11px;line-height:13px;color:#333">Zwiebelbaguette</div>
<div class="t" style="left:134.5px;top:192.69px;width:300px;text-align:center;font-size:11px;line-height:13px;color:#333">Backwaren</div>
<div class="t" style="left:246.5px;top:192.69px;width:300px;text-align:center;font-size:11px;line-height:13px;color:#333">Brot</div>
<div class="t" style="left:452px;top:192.69px;width:44px;text-align:right;font-size:11px;line-height:13px;color:#333;padding-right:1px">1,75 €</div>
<div class="a" style="left:19px;top:230px;width:477px;height:1px;background:#DCDCDC"></div>
<div class="a" style="left:19px;top:210px;width:1px;height:21px;background:#DCDCDC"></div>
<div class="a" style="left:49px;top:210px;width:1px;height:21px;background:#DCDCDC"></div>
<div class="a" style="left:87px;top:210px;width:1px;height:21px;background:#DCDCDC"></div>
<div class="a" style="left:228px;top:210px;width:1px;height:21px;background:#DCDCDC"></div>
<div class="a" style="left:341px;top:210px;width:1px;height:21px;background:#DCDCDC"></div>
<div class="a" style="left:452px;top:210px;width:1px;height:21px;background:#DCDCDC"></div>
<div class="a" style="left:28px;top:213px;width:13px;height:13px;border:1px solid #8a8a8a"></div>
<div class="t" style="left:-81.5px;top:213.69px;width:300px;text-align:center;font-size:11px;line-height:13px;color:#333">111</div>
<div class="t" style="left:8px;top:213.69px;width:300px;text-align:center;font-size:11px;line-height:13px;color:#333">Zwiebelbaguette lang</div>
<div class="t" style="left:134.5px;top:213.69px;width:300px;text-align:center;font-size:11px;line-height:13px;color:#333">Backwaren</div>
<div class="t" style="left:246.5px;top:213.69px;width:300px;text-align:center;font-size:11px;line-height:13px;color:#333">Brot</div>
<div class="t" style="left:452px;top:213.69px;width:44px;text-align:right;font-size:11px;line-height:13px;color:#333;padding-right:1px">2,85 €</div>
<div class="a" style="left:19px;top:251px;width:477px;height:1px;background:#DCDCDC"></div>
<div class="a" style="left:19px;top:231px;width:1px;height:21px;background:#DCDCDC"></div>
<div class="a" style="left:49px;top:231px;width:1px;height:21px;background:#DCDCDC"></div>
<div class="a" style="left:87px;top:231px;width:1px;height:21px;background:#DCDCDC"></div>
<div class="a" style="left:228px;top:231px;width:1px;height:21px;background:#DCDCDC"></div>
<div class="a" style="left:341px;top:231px;width:1px;height:21px;background:#DCDCDC"></div>
<div class="a" style="left:452px;top:231px;width:1px;height:21px;background:#DCDCDC"></div>
<div class="a" style="left:28px;top:234px;width:13px;height:13px;border:1px solid #8a8a8a"></div>
<div class="t" style="left:-81.5px;top:234.69px;width:300px;text-align:center;font-size:11px;line-height:13px;color:#333">112</div>
<div class="t" style="left:8px;top:234.69px;width:300px;text-align:center;font-size:11px;line-height:13px;color:#333">Oliven-Kürbiskernbrot</div>
<div class="t" style="left:134.5px;top:234.69px;width:300px;text-align:center;font-size:11px;line-height:13px;color:#333">Backwaren</div>
<div class="t" style="left:246.5px;top:234.69px;width:300px;text-align:center;font-size:11px;line-height:13px;color:#333">Brot</div>
<div class="t" style="left:452px;top:234.69px;width:44px;text-align:right;font-size:11px;line-height:13px;color:#333;padding-right:1px">3,35 €</div>
<div class="a" style="left:19px;top:272px;width:477px;height:1px;background:#DCDCDC"></div>
<div class="a" style="left:19px;top:252px;width:1px;height:21px;background:#DCDCDC"></div>
<div class="a" style="left:49px;top:252px;width:1px;height:21px;background:#DCDCDC"></div>
<div class="a" style="left:87px;top:252px;width:1px;height:21px;background:#DCDCDC"></div>
<div class="a" style="left:228px;top:252px;width:1px;height:21px;background:#DCDCDC"></div>
<div class="a" style="left:341px;top:252px;width:1px;height:21px;background:#DCDCDC"></div>
<div class="a" style="left:452px;top:252px;width:1px;height:21px;background:#DCDCDC"></div>
<div class="a" style="left:28px;top:255px;width:13px;height:13px;border:1px solid #8a8a8a"></div>
<div class="t" style="left:-81.5px;top:255.69px;width:300px;text-align:center;font-size:11px;line-height:13px;color:#333">113</div>
<div class="t" style="left:8px;top:255.69px;width:300px;text-align:center;font-size:11px;line-height:13px;color:#333">Gersterbrot 1500g</div>
<div class="t" style="left:134.5px;top:255.69px;width:300px;text-align:center;font-size:11px;line-height:13px;color:#333">Backwaren</div>
<div class="t" style="left:246.5px;top:255.69px;width:300px;text-align:center;font-size:11px;line-height:13px;color:#333">Brot</div>
<div class="t" style="left:452px;top:255.69px;width:44px;text-align:right;font-size:11px;line-height:13px;color:#333;padding-right:1px">4,15 €</div>
<div class="a" style="left:19px;top:293px;width:477px;height:1px;background:#DCDCDC"></div>
<div class="a" style="left:19px;top:273px;width:1px;height:21px;background:#DCDCDC"></div>
<div class="a" style="left:49px;top:273px;width:1px;height:21px;background:#DCDCDC"></div>
<div class="a" style="left:87px;top:273px;width:1px;height:21px;background:#DCDCDC"></div>
<div class="a" style="left:228px;top:273px;width:1px;height:21px;background:#DCDCDC"></div>
<div class="a" style="left:341px;top:273px;width:1px;height:21px;background:#DCDCDC"></div>
<div class="a" style="left:452px;top:273px;width:1px;height:21px;background:#DCDCDC"></div>
<div class="a" style="left:28px;top:276px;width:13px;height:13px;border:1px solid #8a8a8a"></div>
<div class="t" style="left:-81.5px;top:276.69px;width:300px;text-align:center;font-size:11px;line-height:13px;color:#333">114</div>
<div class="t" style="left:8px;top:276.69px;width:300px;text-align:center;font-size:11px;line-height:13px;color:#333">Gersterbrot 1000g</div>
<div class="t" style="left:134.5px;top:276.69px;width:300px;text-align:center;font-size:11px;line-height:13px;color:#333">Backwaren</div>
<div class="t" style="left:246.5px;top:276.69px;width:300px;text-align:center;font-size:11px;line-height:13px;color:#333">Brot</div>
<div class="t" style="left:452px;top:276.69px;width:44px;text-align:right;font-size:11px;line-height:13px;color:#333;padding-right:1px">3,15 €</div>
<div class="a" style="left:19px;top:314px;width:477px;height:1px;background:#DCDCDC"></div>
<div class="a" style="left:19px;top:294px;width:1px;height:21px;background:#DCDCDC"></div>
<div class="a" style="left:49px;top:294px;width:1px;height:21px;background:#DCDCDC"></div>
<div class="a" style="left:87px;top:294px;width:1px;height:21px;background:#DCDCDC"></div>
<div class="a" style="left:228px;top:294px;width:1px;height:21px;background:#DCDCDC"></div>
<div class="a" style="left:341px;top:294px;width:1px;height:21px;background:#DCDCDC"></div>
<div class="a" style="left:452px;top:294px;width:1px;height:21px;background:#DCDCDC"></div>
<div class="a" style="left:28px;top:297px;width:13px;height:13px;border:1px solid #8a8a8a"></div>
<div class="t" style="left:-81.5px;top:297.69px;width:300px;text-align:center;font-size:11px;line-height:13px;color:#333">115</div>
<div class="t" style="left:8px;top:297.69px;width:300px;text-align:center;font-size:11px;line-height:13px;color:#333">Mini Gerster 500g</div>
<div class="t" style="left:134.5px;top:297.69px;width:300px;text-align:center;font-size:11px;line-height:13px;color:#333">Backwaren</div>
<div class="t" style="left:246.5px;top:297.69px;width:300px;text-align:center;font-size:11px;line-height:13px;color:#333">Brot</div>
<div class="t" style="left:452px;top:297.69px;width:44px;text-align:right;font-size:11px;line-height:13px;color:#333;padding-right:1px">2,00 €</div>
</div>
<div class="a" style="left:543px;top:340px;width:17px;height:308px;background:#F0F0F0;"></div>
<div class="a" style="left:543px;top:357px;width:17px;height:18px;background:#C8C8C8;"></div>
<div class="a" style="left:47px;top:648px;width:45px;height:17px;background:#EBEBEB;"></div>
<div class="a" style="left:92px;top:648px;width:122px;height:17px;background:#fff;"></div>
<div class="a" style="left:214px;top:648px;width:59px;height:17px;background:#EBEBEB;"></div>
<div class="a" style="left:273px;top:648px;width:247px;height:17px;background:#C8C8C8;"></div>
<div class="a" style="left:520px;top:648px;width:23px;height:17px;background:#F0F0F0;"></div>
<div class="a" style="left:543px;top:648px;width:17px;height:17px;background:#fff;"></div>
<div class="t" style="left:102.5px;top:650.39px;font-size:11px;line-height:13px;color:#333;">Datensatz 1 von 191</div>
<div class="a" style="left:256px;top:648px;width:17px;height:17px;background:#F0F0F0;"></div>
<svg class="a" style="left:0px;top:0px" width="1024" height="768" viewBox="0 0 1024 768"><rect x="563.5" y="288.5" width="406" height="376" fill="#fff" stroke="#A8A8A8" stroke-width="1"/><rect x="565.5" y="347.5" width="402" height="314" fill="#fff" stroke="#A0A0A0" stroke-width="1"/><rect x="633.5" y="326.5" width="50" height="21" fill="#fff" stroke="#A0A0A0" stroke-width="1"/><rect x="684.5" y="326.5" width="65" height="21" fill="#fff" stroke="#A0A0A0" stroke-width="1"/><rect x="750.5" y="326.5" width="89" height="21" fill="#fff" stroke="#A0A0A0" stroke-width="1"/><path d="M565.5 348v-23.5h68v23.5" fill="#fff" stroke="#A0A0A0" stroke-width="1"/><rect x="566" y="346" width="67" height="3" fill="#fff"/></svg>
<div class="t" style="left:576.5px;top:298.43px;font-size:13.2px;line-height:16px;color:#333;">Details</div>
<div class="t" style="left:508.5px;top:330.69px;font-size:11px;line-height:13px;color:#333;width:300px;text-align:center;">Preise</div>
<div class="t" style="left:567.0px;top:330.69px;font-size:11px;line-height:13px;color:#333;width:300px;text-align:center;">Optionen</div>
<div class="t" style="left:645.0px;top:330.69px;font-size:11px;line-height:13px;color:#333;width:300px;text-align:center;">Informationen</div>
<div class="t" style="left:449.0px;top:330.19px;font-size:11px;line-height:13px;color:#333;width:300px;text-align:center;">Allgemein</div>
<div class="a" style="left:950px;top:348px;width:17px;height:313px;background:#F0F0F0;"></div>
<div class="a" style="left:950px;top:365px;width:17px;height:214px;background:#C8C8C8;"></div>
<div class="a" style="left:566px;top:348px;width:384px;height:313.5px;overflow:hidden">
<div class="a" style="left:12px;top:23px;width:360px;height:172px;border:1px solid #D4D4D4"></div>
<div class="a" style="left:20px;top:17px;width:30px;height:12px;background:#fff"></div>
<div class="t" style="left:23.5px;top:15.69px;font-size:11px;line-height:13px;color:#333;">Info</div>
<div class="t" style="left:23.5px;top:46.69px;font-size:11px;line-height:13px;color:#333;">PLU</div>
<div class="a" style="left:127px;top:43px;width:119px;height:20px;border:1px solid #ABABAB;background:#fff"></div>
<div class="t" style="left:23.5px;top:70.69px;font-size:11px;line-height:13px;color:#333;">Artikel-Nr.</div>
<div class="a" style="left:127px;top:67px;width:119px;height:20px;border:1px solid #ABABAB;background:#fff"></div>
<div class="t" style="left:23.5px;top:94.69px;font-size:11px;line-height:13px;color:#333;">Artikel-Name</div>
<div class="a" style="left:127px;top:91px;width:119px;height:20px;border:1px solid #ABABAB;background:#fff"></div>
<div class="t" style="left:131px;top:94.69px;font-size:11px;line-height:13px;color:#333;">Frühlingsbrot</div>
<div class="t" style="left:23.5px;top:118.69px;font-size:11px;line-height:13px;color:#333;">Information</div>
<div class="a" style="left:127px;top:115px;width:119px;height:20px;border:1px solid #ABABAB;background:#fff"></div>
<div class="t" style="left:23.5px;top:142.69px;font-size:11px;line-height:13px;color:#333;">EAN</div>
<div class="a" style="left:127px;top:139px;width:119px;height:20px;border:1px solid #ABABAB;background:#fff"></div>
<div class="t" style="left:131px;top:141.69px;font-size:11px;line-height:13px;color:#333;">-</div>
<div class="t" style="left:23.5px;top:166.69px;font-size:11px;line-height:13px;color:#333;">Einheit</div>
<div class="a" style="left:127px;top:163px;width:119px;height:20px;border:1px solid #ABABAB;background:#fff"></div>
<div class="t" style="left:131px;top:166.69px;font-size:11px;line-height:13px;color:#333;">Stk</div>
<div class="a" style="left:229px;top:44px;width:16px;height:18px;background:#F0F0F0;border-left:1px solid #C8C8C8"></div>
<div class="t" style="left:134px;top:46.69px;font-size:11px;line-height:13px;color:#333;width:92px;text-align:right;">101</div>
<div class="a" style="left:250px;top:43px;width:110px;height:140px;border:1px solid #ABABAB"></div>
<div class="t" style="left:250px;top:106.30px;width:110px;text-align:center;font-size:10.5px;line-height:13px;color:#333">Kein Bild vorhanden</div>
<div class="a" style="left:12px;top:210px;width:360px;height:120px;border:1px solid #D4D4D4"></div>
<div class="a" style="left:20px;top:203px;width:72px;height:12px;background:#fff"></div>
<div class="t" style="left:23.5px;top:202.69px;font-size:11px;line-height:13px;color:#333;">Einstellungen</div>
<div class="t" style="left:23.5px;top:233.69px;font-size:11px;line-height:13px;color:#333;">Haupt-Warengruppe</div>
<div class="a" style="left:127px;top:230px;width:233px;height:20px;border:1px solid #ABABAB;background:#fff"></div>
<div class="a" style="left:343px;top:231px;width:16px;height:18px;background:#F0F0F0;border-left:1px solid #C8C8C8"></div>
<div class="t" style="left:131px;top:233.69px;font-size:11px;line-height:13px;color:#333;">Backwaren</div>
<div class="t" style="left:23.5px;top:257.69px;font-size:11px;line-height:13px;color:#333;">Unter-Warengruppe</div>
<div class="a" style="left:127px;top:254px;width:233px;height:20px;border:1px solid #ABABAB;background:#fff"></div>
<div class="a" style="left:343px;top:255px;width:16px;height:18px;background:#F0F0F0;border-left:1px solid #C8C8C8"></div>
<div class="t" style="left:131px;top:257.69px;font-size:11px;line-height:13px;color:#333;">Brot</div>
<div class="t" style="left:23.5px;top:281.69px;font-size:11px;line-height:13px;color:#333;">Lieferant</div>
<div class="a" style="left:127px;top:278px;width:233px;height:20px;border:1px solid #ABABAB;background:#fff"></div>
<div class="a" style="left:343px;top:279px;width:16px;height:18px;background:#F0F0F0;border-left:1px solid #C8C8C8"></div>
<div class="t" style="left:131px;top:280.69px;font-size:11px;line-height:13px;color:#333;">-</div>
<div class="t" style="left:23.5px;top:305.69px;font-size:11px;line-height:13px;color:#333;">Hauptlager</div>
<div class="a" style="left:127px;top:302px;width:233px;height:20px;border:1px solid #ABABAB;background:#fff"></div>
<div class="a" style="left:343px;top:303px;width:16px;height:18px;background:#F0F0F0;border-left:1px solid #C8C8C8"></div>
<div class="t" style="left:131px;top:304.69px;font-size:11px;line-height:13px;color:#333;">-</div>
</div>
<div class="a" style="left:565px;top:661px;width:403px;height:1px;background:#A0A0A0;"></div>
<div class="a" style="left:47px;top:665px;width:925px;height:25px;background:#0070C0;"></div>
<svg class="a" style="left:0px;top:0px" width="1024" height="768" viewBox="0 0 1024 768"><rect x="917.5" y="171.5" width="9" height="9" fill="none" stroke="#6E6E6E" stroke-width="1"/><rect x="917" y="171" width="10" height="2.2" fill="#6E6E6E"/><path d="M947.8 171.8l8.4 8.4M956.2 171.8l-8.4 8.4" stroke="#6E6E6E" stroke-width="1.9"/><path d="M518.0 253h5l-2.5 3z" fill="#888"/><path d="M571.5 253h5l-2.5 3z" fill="#888"/><path d="M625.0 253h5l-2.5 3z" fill="#888"/><path d="M76.8 227.5H63.5V204.5H75.5L82.5 211.5V221.7M75.5 204.5V211.5H82.5" fill="none" stroke="#7a7a7a" stroke-width="1.2"/><rect x="78.1" y="217.9" width="2.7" height="12.8" fill="#6AA58C"/><rect x="73" y="223" width="12.9" height="2.7" fill="#6AA58C"/><path d="M116.5 206V201.5H128.5L135.5 208.5V224.5H130M128.5 201.5V208.5H135.5" fill="none" stroke="#7a7a7a" stroke-width="1.2"/><path d="M110.5 229.5V206.5H122.5L129.5 213.5V229.5ZM122.5 206.5V213.5H129.5" fill="#fff" stroke="#7a7a7a" stroke-width="1.2"/><g transform="translate(178,212.9) rotate(-45)"><rect x="-10.4" y="-6.3" width="20.8" height="12.6" rx="1.5" fill="#D95B3B"/><rect x="-15.3" y="-6.3" width="3.9" height="12.6" rx="0.8" fill="#4A82C0"/></g><path d="M232.9 208.6 A8.75 8.75 0 0 1 247.85 214.8" fill="none" stroke="#4A82C0" stroke-width="4.3"/><path d="M245.3 221 A8.75 8.75 0 0 1 230.35 214.8" fill="none" stroke="#4A82C0" stroke-width="4.3"/><path d="M223.7 215.6h13.5l-6.7-6.8z" fill="#4A82C0"/><path d="M240.7 214.3h13.5l-6.7 6.8z" fill="#4A82C0"/><path d="M229.5 205.5l9 9M248.7 224.1l-9-9" stroke="#fff" stroke-width="1"/><path d="M295 202h22a2 2 0 0 1 2 2v21.75a2 2 0 0 1-2 2h-22a2 2 0 0 1-2-2v-21.75a2 2 0 0 1 2-2z" fill="#9466B6"/><path d="M297.8 202h4.3v8.75h10.7v-8.75h1.4v10h-16.4z" fill="#fff"/><rect x="307.9" y="204" width="3.1" height="5" fill="#fff"/><rect x="296" y="214.8" width="20" height="10.2" rx="1" fill="#fff"/><path d="M358.65 214.8 A9.55 9.55 0 1 0 360.4 209.3" fill="none" stroke="#4A82C0" stroke-width="4.3"/><path d="M355.1 204.9v9.9h9.5z" fill="#4A82C0"/><rect x="354" y="214.8" width="8" height="2.4" fill="#fff"/><path d="M411.5 202h22a2 2 0 0 1 2 2v21.75a2 2 0 0 1-2 2h-22a2 2 0 0 1-2-2v-21.75a2 2 0 0 1 2-2z" fill="#9466B6"/><path d="M414.3 202h4.3v8.75h10.7v-8.75h1.4v10h-16.4z" fill="#fff"/><rect x="424.4" y="204" width="3.1" height="5" fill="#fff"/><rect x="412.5" y="214.8" width="20" height="10.2" rx="1" fill="#fff"/><rect x="425" y="215" width="14" height="16" fill="#fff"/><rect x="428.8" y="218" width="5.5" height="7" fill="#6AA58C"/><path d="M425 224h13.5l-6.75 7z" fill="#6AA58C"/><path d="M456 202h22a2 2 0 0 1 2 2v21.75a2 2 0 0 1-2 2h-22a2 2 0 0 1-2-2v-21.75a2 2 0 0 1 2-2z" fill="#9466B6"/><path d="M458.8 202h4.3v8.75h10.7v-8.75h1.4v10h-16.4z" fill="#fff"/><rect x="468.9" y="204" width="3.1" height="5" fill="#fff"/><rect x="457" y="214.8" width="20" height="10.2" rx="1" fill="#fff"/><rect x="468" y="211" width="16" height="20" fill="#fff"/><rect x="469.7" y="212.7" width="12.6" height="16.6" fill="#fff" stroke="#777" stroke-width="1.3"/><rect x="462.5" y="218.6" width="8" height="2.2" fill="#4A82C0"/><path d="M468.5 215l5 4.7-5 4.7-1.5-1.3 3.5-3.4-3.5-3.4z" fill="#4A82C0"/><rect x="505.5" y="199.5" width="31" height="31" rx="2.5" fill="#F7F7F7" stroke="#C6C6C6" stroke-width="1"/><rect x="559.5" y="199.5" width="31" height="31" rx="2.5" fill="#F7F7F7" stroke="#C6C6C6" stroke-width="1"/><rect x="612.5" y="199.5" width="31" height="31" rx="2.5" fill="#F7F7F7" stroke="#C6C6C6" stroke-width="1"/><rect x="513.5" y="208.5" width="15" height="12" fill="#fff" stroke="#777" stroke-width="1.2"/><rect x="514" y="209" width="14" height="3.2" fill="#9DBCE0"/><path d="M513.5 212.5h15M513.5 216.5h15M518.5 208.5v12M523.5 208.5v12" stroke="#777" stroke-width="1.1"/><rect x="568.5" y="208.5" width="13" height="12" fill="#fff" stroke="#777" stroke-width="1.2"/><path d="M569 220v-4l2.5-2.5 3 3 2-2 4 3.5v2z" fill="#5E9E86"/><circle cx="578" cy="211.8" r="1.4" fill="#F0B84A"/><rect x="620" y="207" width="16" height="16" fill="#C5D5E8"/><rect x="624" y="211" width="8" height="8" fill="#3F7AB8"/><path d="M676.5 203a2 2 0 0 1 2-2h3v24.5h-5z" fill="#4A7FBA"/><rect x="681.5" y="201" width="18.5" height="24.5" fill="#4A7FBA"/><path d="M676.5 225.5v1.8a1.2 1.2 0 0 0 1.2 1.2h22.3v-1.6h-21.8a.7.7 0 0 1 0-1.4z" fill="#4A7FBA"/><path d="M685.9 209.8c0-3.1 2.1-5 4.8-5c2.8 0 4.6 1.8 4.6 4.4c0 2-1 3.1-2.4 4.1c-1 .7-1.3 1.2-1.3 2.6v.8h-2.8v-1.1c0-2 .6-3 2-4c1.1-.8 1.5-1.4 1.5-2.3c0-1.2-.7-1.9-1.7-1.9c-1.2 0-1.9.8-1.9 2.4zM688.8 218.4h2.9v3.6h-2.9z" fill="#fff"/><rect x="741" y="200" width="30" height="30" fill="#DA6140"/><path d="M747.5 206.5l17 17M764.5 206.5l-17 17" stroke="#fff" stroke-width="3.6"/><rect x="75.5" y="323.5" width="12" height="12" fill="#fff" stroke="#8a8a8a" stroke-width="1"/><path d="M56 346.5v7.5l4-3.75z" fill="#555"/><path d="M548 351l3.5-3.5 3.5 3.5" fill="none" stroke="#777" stroke-width="1.9"/><path d="M548 638l3.5 3.5 3.5-3.5" fill="none" stroke="#777" stroke-width="1.9"/><rect x="51" y="653" width="1.5" height="7" fill="#9a9a9a"/><path d="M56.5 653v7l-4-3.5zM60.5 653v7l-4-3.5z" fill="#9a9a9a"/><path d="M70 653v7l-4-3.5zM74 653v7l-4-3.5z" fill="#9a9a9a"/><path d="M87 653v7l-4-3.5z" fill="#9a9a9a"/><path d="M220 652.5v8l4-4z" fill="#7a7a7a"/><path d="M232 652.5v8l4-4zM236 652.5v8l4-4z" fill="#7a7a7a"/><path d="M245.5 652.5v8l4-4zM249.5 652.5v8l4-4z" fill="#7a7a7a"/><rect x="253.8" y="652.5" width="1.6" height="8" fill="#7a7a7a"/><path d="M266.5 652.5l-4 4 4 4" fill="none" stroke="#777" stroke-width="2"/><path d="M529.5 652.5l4 4-4 4" fill="none" stroke="#777" stroke-width="2"/><path d="M950.5 302.5h5v5h-5zM949 307.5h8M953 307.5v3" fill="none" stroke="#666" stroke-width="1.2"/><rect x="953.5" y="303" width="1.5" height="4" fill="#666"/><path d="M955 359l3.5-3.5 3.5 3.5" fill="none" stroke="#777" stroke-width="1.9"/><path d="M955 651l3.5 3.5 3.5-3.5" fill="none" stroke="#777" stroke-width="1.9"/><path d="M913.5 585.5l3.5 3.5 3.5-3.5" fill="none" stroke="#777" stroke-width="1.9"/><path d="M913.5 609.5l3.5 3.5 3.5-3.5" fill="none" stroke="#777" stroke-width="1.9"/><path d="M913.5 633.5l3.5 3.5 3.5-3.5" fill="none" stroke="#777" stroke-width="1.9"/><path d="M913.5 657.5l3.5 3.5 3.5-3.5" fill="none" stroke="#777" stroke-width="1.9"/><path d="M801 398.3l2.6-3 2.6 3M801 403.3l2.6 3.2 2.6-3.2" fill="none" stroke="#7a7a7a" stroke-width="1.8"/><rect x="796" y="400" width="15" height="1" fill="#e2e2e2"/><path d="M966 684h2v2h-2zM963 684h2v2h-2zM960 684h2v2h-2zM966 681h2v2h-2zM963 681h2v2h-2zM966 678h2v2h-2z" fill="#cfe3f5"/></svg>
<div class="a" style="left:0px;top:728px;width:1024px;height:40px;background:#000;"></div>
<div class="a" style="left:48px;top:728px;width:320px;height:40px;background:#333;"></div>
<svg class="a" style="left:15.6px;top:739.8px" width="17" height="17" viewBox="0 0 17 17"><path d="M0 2.2l6.6-0.9v6.6h-6.6zM7.6 1.1l9-1.1v7.9h-9zM0 8.9h6.6v6.6l-6.6-0.9zM7.6 8.9h9v7.3l-9-1.2z" fill="#fff"/></svg>
<svg class="a" style="left:57px;top:737px" width="22" height="22" viewBox="0 0 22 22"><circle cx="10.6" cy="10.9" r="8.9" fill="none" stroke="#fff" stroke-width="2.7"/></svg>
<div class="t" style="left:84px;top:740.88px;font-size:14.5px;line-height:17px;color:#bdbab6;">Frag mich etwas</div>
<svg class="a" style="left:0px;top:0px" width="1024" height="768" viewBox="0 0 1024 768"><rect x="344.6" y="740.6" width="6" height="10.6" rx="1.2" fill="none" stroke="#9a9a9a" stroke-width="1.1"/><path d="M342.4 748.2v2.2a5.2 3.6 0 0 0 10.4 0v-2.2M347.6 754v1.6M345.3 755.8h4.7" fill="none" stroke="#9a9a9a" stroke-width="1.1"/></svg>
<svg class="a" style="left:0px;top:0px" width="1024" height="768" viewBox="0 0 1024 768"><rect x="386.6" y="741.6" width="10.8" height="12.6" fill="none" stroke="#fff" stroke-width="1.3"/><path d="M385 743.6h-2.1v8.8h2.1M399 743.6h2.1v8.8h-2.1" fill="none" stroke="#fff" stroke-width="1.2"/></svg>
<svg class="a" style="left:0px;top:0px" width="1024" height="768" viewBox="0 0 1024 768"><path fill-rule="evenodd" d="M433 747.5C435 740 440 737 444.5 737C450 737 453.2 741 453.2 746.5V750H440C440.5 753 443 755 446.5 755C448.5 755 450 754.5 451 753.8V758C449.5 758.8 447.5 759.2 445.5 759.2C439 759.2 435 755.5 435 750C435 747 436 744.5 438 742.5C436 743.5 434.5 745.5 433 747.5ZM439.7 746.6H446.4C446.2 743.8 444.8 742 442.9 742C441.2 742 440 743.8 439.7 746.6Z" fill="#0F84DD"/></svg>
<svg class="a" style="left:0px;top:0px" width="1024" height="768" viewBox="0 0 1024 768"><path d="M481 740h6.5l1.5 1.5h13.5v14.8h-21.5z" fill="#F2C14A"/><rect x="481" y="742.5" width="21.5" height="13.8" fill="#FCE08E"/><rect x="482.5" y="740.8" width="3" height="1" fill="#7cc"/><path d="M485 756.8v-8.3h14v8.3h-3.5v-4.6h-7v4.6z" fill="#2E9BE0"/></svg>
<svg class="a" style="left:0px;top:0px" width="1024" height="768" viewBox="0 0 1024 768"><path d="M536.8 744V740.5a4.7 4.7 0 0 1 9.4 0V744" fill="none" stroke="#fff" stroke-width="1.3"/><path d="M529 742h23v16a1 1 0 0 1-1 1h-21a1 1 0 0 1-1-1z" fill="#fff"/><rect x="535" y="744.7" width="5" height="5" fill="#F35325"/><rect x="540.8" y="744.7" width="5" height="5" fill="#81BC06"/><rect x="535" y="751" width="5" height="5" fill="#05A6F0"/><rect x="540.8" y="751" width="5" height="5" fill="#FFBA08"/></svg>
<div class="a" style="left:566px;top:728px;width:48px;height:40px;background:#333;"></div>
<div class="a" style="left:566px;top:766px;width:48px;height:2px;background:#76B9ED;"></div>
<svg class="a" style="left:0px;top:0px" width="1024" height="768" viewBox="0 0 1024 768"><defs><linearGradient id="pg" x1="0" y1="0" x2="1" y2="1"><stop offset="0" stop-color="#fafafa"/><stop offset="1" stop-color="#c8c8c8"/></linearGradient></defs><rect x="579" y="737" width="22" height="22" rx="1" fill="url(#pg)"/><rect x="579" y="757.5" width="22" height="1.5" fill="#777"/><g transform="translate(580.5,748.5) scale(0.62,1)"><text font-family="Liberation Sans" font-size="13" fill="#111">Pon</text></g><g transform="translate(587.5,756.8) scale(0.62,1)"><text font-family="Liberation Sans" font-size="12" fill="#111">Dot</text></g><text x="580.5" y="754" font-family="Liberation Sans" font-size="4" fill="#555">by</text><circle cx="598" cy="750.5" r="1.3" fill="#d33"/></svg>
<svg class="a" style="left:838px;top:744px" width="14" height="8" viewBox="0 0 14 8"><path d="M1 7l6-6 6 6" fill="none" stroke="#fff" stroke-width="1.3"/></svg>
<svg class="a" style="left:861px;top:741px" width="17" height="15" viewBox="0 0 17 15"><rect x="3.5" y="1.5" width="12" height="9" fill="none" stroke="#fff" stroke-width="1.1"/><path d="M9.5 10.5v3M5.5 14h8" stroke="#fff" stroke-width="1.1"/><rect x="0.5" y="0.5" width="4" height="4" fill="#000" stroke="#fff" stroke-width="1"/><path d="M2.5 4.5v10" stroke="#fff" stroke-width="1"/></svg>
<svg class="a" style="left:0px;top:0px" width="1024" height="768" viewBox="0 0 1024 768"><path d="M885.5 745.3h2.6l3.4-3v11.8l-3.4-3h-2.6z" fill="none" stroke="#fff" stroke-width="1.1" stroke-linejoin="miter"/><path d="M893.6 745.3a3.6 3.6 0 0 1 0 5.8M895.6 743.2a6.6 6.6 0 0 1 0 10M897.8 741.2a9.6 9.6 0 0 1 0 14" fill="none" stroke="#fff" stroke-width="1.1"/><path d="M897.8 741.2a9.6 9.6 0 0 1 0 14" fill="none" stroke="#000" stroke-width="0.6" opacity="0.5"/></svg>
<div class="t" style="left:788.0px;top:732.26px;font-size:10.8px;line-height:13px;color:#fff;width:300px;text-align:center;">10:32</div>
<div class="t" style="left:788.0px;top:749.76px;font-size:10.8px;line-height:13px;color:#fff;width:300px;text-align:center;">10.11.2017</div>
<svg class="a" style="left:0px;top:0px" width="1024" height="768" viewBox="0 0 1024 768"><path d="M983 740h16v13h-7l-2.5 2.5v-2.5h-6.5z" fill="#fff"/><path d="M986 743.5h10M986 746.6h10M986 749.6h6" stroke="#000" stroke-width="1"/><circle cx="998.7" cy="755.1" r="8.2" fill="#000"/><circle cx="998.7" cy="755.1" r="7.6" fill="#262626" stroke="#8a8a8a" stroke-width="1"/><path d="M996.3 752.8l2.9-2.2v8.3" fill="none" stroke="#fff" stroke-width="1.9"/></svg>
<div class="a" style="left:1019px;top:728px;width:1px;height:40px;background:#555;"></div>
</body></html>
